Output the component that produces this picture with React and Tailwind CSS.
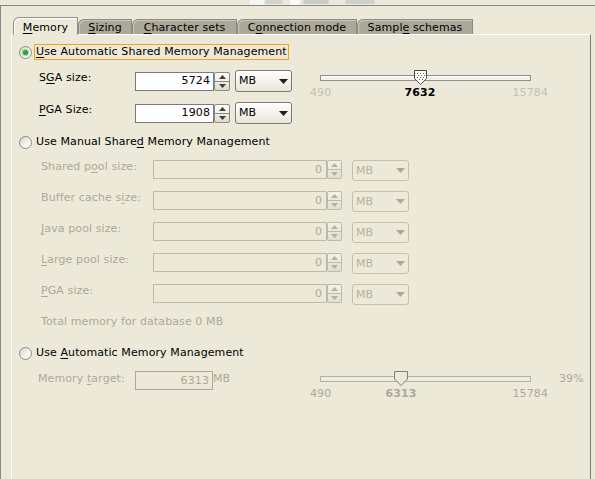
import React from "react";

const U = ({ children }) => (
  <span className="underline underline-offset-[2px] decoration-1">{children}</span>
);

function Radio({ checked, focus, children }) {
  return (
    <div className="h-[16px] flex items-center pl-[7px]">
      <div className="w-[13px] h-[13px] rounded-full border border-[#8b8b86] bg-gradient-to-br from-[#d3d1c6] via-[#f1f0ea] to-white flex items-center justify-center">
        {checked && <div className="w-[5px] h-[5px] rounded-full bg-[#2ea42e] shadow-[0_0_1px_1px_#8fd68f]" />}
      </div>
      <div
        className={
          focus
            ? "ml-[2px] h-[16px] px-[1px] flex items-center border border-[#f5a31c]"
            : "ml-[2px] h-[16px] px-[1px] flex items-center border border-transparent"
        }
      >
        {children}
      </div>
    </div>
  );
}

function Spinner({ disabled }) {
  const c = disabled ? "#b4b19f" : "#3d3d3d";
  return (
    <div
      className={
        disabled
          ? "w-[15px] h-full flex flex-col border border-[#bdbaa8] rounded-[2px] bg-gradient-to-b from-[#f3f2ea] to-[#e2dfcf]"
          : "w-[16px] h-full flex flex-col border border-[#8a8a8a] rounded-[2px] bg-gradient-to-b from-white to-[#dedbc9]"
      }
    >
      <div
        className={
          disabled
            ? "flex-1 flex items-center justify-center border-b border-[#bdbaa8]"
            : "flex-1 flex items-center justify-center border-b border-[#8a8a8a]"
        }
      >
        <svg width="7" height="4">
          <path d="M0 4 L3.5 0 L7 4Z" fill={c} />
        </svg>
      </div>
      <div className="flex-1 flex items-center justify-center">
        <svg width="7" height="4">
          <path d="M0 0 L7 0 L3.5 4Z" fill={c} />
        </svg>
      </div>
    </div>
  );
}

function Combo({ disabled }) {
  return (
    <div
      className={
        disabled
          ? "w-[57px] h-[21px] flex items-center justify-between pl-[3px] pr-[3px] rounded-[3px] border border-[#c3c0ad] text-[#b4b19f]"
          : "w-[57px] h-[22px] flex items-center justify-between pl-[3px] pr-[3px] rounded-[3px] border border-[#7a7a7a] bg-gradient-to-b from-white to-[#e9e6d6]"
      }
    >
      <span>MB</span>
      <svg width="9" height="5">
        <path d="M0 0H9L4.5 5Z" fill={disabled ? "#aca899" : "#1e1e1e"} />
      </svg>
    </div>
  );
}

function Thumb({ disabled }) {
  if (disabled) {
    return (
      <svg width="15" height="16">
        <path d="M0.5 0.5H13.5V8L7 14.5L0.5 8Z" fill="#ECE9D8" stroke="#7f7f7f" />
      </svg>
    );
  }
  const dots = [
    [3, 3], [6, 3], [9, 3], [4, 5], [7, 5], [10, 5], [3, 7], [6, 7], [9, 7], [5, 9], [8, 9],
  ];
  return (
    <svg width="14" height="16">
      <path d="M0.5 0.5H12.5V8.5L6.5 14.5L0.5 8.5Z" fill="#fbfaf5" stroke="#4a4a4a" />
      {dots.map(([x, y], i) => (
        <rect key={i} x={x} y={y} width="1" height="1" fill="#6a6a6a" />
      ))}
    </svg>
  );
}

function Slider({ disabled, value, thumbClass, labelClass }) {
  return (
    <div className="w-[238px] relative">
      <div
        className={
          disabled
            ? "ml-[10px] w-[211px] h-[6px] border border-[#b3b09e] bg-[#eeebdf] relative"
            : "ml-[10px] w-[211px] h-[6px] border border-[#8f8f8f] bg-[#f2f1ea] shadow-[inset_0_1px_0_#fff] relative"
        }
      >
        <div className={thumbClass}>
          <Thumb disabled={disabled} />
        </div>
      </div>
      <div
        className={
          disabled
            ? "mt-[5px] h-[14px] flex justify-between text-[#aca899] relative"
            : "mt-[5px] h-[14px] flex justify-between text-[#c4c1b1] relative"
        }
      >
        <span>490</span>
        <span className={labelClass}>{value}</span>
        <span>15784</span>
      </div>
    </div>
  );
}

function DisabledRow({ label }) {
  return (
    <div className="flex items-start h-[21px]">
      <div className="w-[112px] text-[#aca899]">{label}</div>
      <div className="flex h-[19px]">
        <div className="w-[174px] h-full border border-[#bdbaa8] flex items-center justify-end pr-[4px] text-[#aca899]">
          0
        </div>
        <Spinner disabled />
      </div>
      <div className="ml-[10px]">
        <Combo disabled />
      </div>
    </div>
  );
}

function Tab({ w, selected, children }) {
  return (
    <div
      className={
        selected
          ? "h-[18px] -mb-px relative z-10 flex justify-center pt-[3px] bg-[#ECE9D8] border-t border-l border-r border-[#919191] rounded-tl-[6px] shadow-[inset_1px_1px_0_#ffffff]"
          : "h-[15px] flex justify-center pt-[1px] bg-[#aca899] border-t border-l border-r border-[#8a8a8a] rounded-tl-[6px] shadow-[inset_1px_1px_0_#c9c6b6]"
      }
      style={{ width: w }}
    >
      {children}
    </div>
  );
}

export default function App() {
  return (
    <div className="w-[595px] h-[479px] overflow-hidden bg-[#ECE9D8] relative font-['DejaVu_Sans',sans-serif] text-[11px] leading-[14px] tracking-[0.1px] text-black">
      <svg className="absolute top-0 left-[245px]" width="150" height="5">
        <rect x="5" y="0" width="14" height="5" fill="#f6f6f4" />
        <rect x="20" y="0" width="18" height="4" rx="2" fill="#d2d2cf" />
        <rect x="45" y="0" width="10" height="5" fill="#fafaf8" />
        <rect x="58" y="0" width="26" height="4" rx="2" fill="#c9c9c6" />
        <rect x="100" y="0" width="30" height="4" rx="2" fill="#cfcfcc" />
      </svg>
      <div className="mt-[5px] border-t border-l border-[#878787] h-[474px] pl-[10px] pt-[11px]">
        <div className="flex items-end h-[17px] pl-[2px]">
          <Tab w={65} selected>
            <span><U>M</U>emory</span>
          </Tab>
          <Tab w={54}>
            <span><U>S</U>izing</span>
          </Tab>
          <Tab w={105}>
            <span><U>C</U>haracter sets</span>
          </Tab>
          <Tab w={120}>
            <span>C<U>o</U>nnection mode</span>
          </Tab>
          <Tab w={116}>
            <span>Sampl<U>e</U> schemas</span>
          </Tab>
        </div>
        <div className="w-[580px] h-[460px] border-t border-l border-white border-r border-r-[#7d7d7d] flex flex-col">
          <div className="mt-[9px]">
            <Radio checked focus>
              <span><U>U</U>se Automatic Shared Memory Management</span>
            </Radio>
          </div>

          <div className="mt-[10px] flex">
            <div className="ml-[27px] w-[271px] flex flex-col gap-[10px]">
              <div className="flex items-center h-[22px]">
                <div className="w-[96px] self-start mt-[1px]">
                  S<U>G</U>A size:
                </div>
                <div className="flex h-[19px]">
                  <div className="w-[79px] h-full border border-[#7a7a7a] bg-white flex items-center justify-end pr-[3px]">
                    5724
                  </div>
                  <Spinner />
                </div>
                <div className="ml-[5px]">
                  <Combo />
                </div>
              </div>
              <div className="flex items-center h-[22px]">
                <div className="w-[96px] self-start mt-[1px]">
                  <U>P</U>GA Size:
                </div>
                <div className="flex h-[19px]">
                  <div className="w-[79px] h-full border border-[#7a7a7a] bg-white flex items-center justify-end pr-[3px]">
                    1908
                  </div>
                  <Spinner />
                </div>
                <div className="ml-[5px]">
                  <Combo />
                </div>
              </div>
            </div>
            <div className="pt-[5px]">
              <Slider
                value="7632"
                thumbClass="absolute left-[93px] top-[-6px]"
                labelClass="absolute left-[110px] -translate-x-1/2 font-bold text-black"
              />
            </div>
          </div>

          <div className="mt-[10px]">
            <Radio>
              <span>Use Manual Share<U>d</U> Memory Management</span>
            </Radio>
          </div>

          <div className="mt-[10px] ml-[29px] flex flex-col gap-[10px]">
            <DisabledRow label={<span>Shared p<U>o</U>ol size:</span>} />
            <DisabledRow label={<span>Buffer cache s<U>i</U>ze:</span>} />
            <DisabledRow label={<span><U>J</U>ava pool size:</span>} />
            <DisabledRow label={<span><U>L</U>arge pool size:</span>} />
            <DisabledRow label={<span><U>P</U>GA size:</span>} />
          </div>

          <div className="mt-[10px] ml-[29px] h-[14px] text-[#aca899]">
            Total memory for database 0 MB
          </div>

          <div className="mt-[16px]">
            <Radio>
              <span>Use <U>A</U>utomatic Memory Management</span>
            </Radio>
          </div>

          <div className="mt-[10px] flex items-start">
            <div className="ml-[26px] w-[272px] flex items-start text-[#aca899]">
              <div className="w-[97px] mt-[1px]">
                Memory <U>t</U>arget:
              </div>
              <div className="w-[78px] h-[19px] border border-[#aca899] flex items-center justify-end pr-[3px]">
                6313
              </div>
              <div className="mt-[1px]">MB</div>
            </div>
            <div className="pt-[5px]">
              <Slider
                disabled
                value="6313"
                thumbClass="absolute left-[73px] top-[-6px]"
                labelClass="absolute left-[91px] -translate-x-1/2 font-bold"
              />
            </div>
            <div className="ml-[11px] mt-[1px] text-[#aca899]">39%</div>
          </div>
        </div>
      </div>
    </div>
  );
}
